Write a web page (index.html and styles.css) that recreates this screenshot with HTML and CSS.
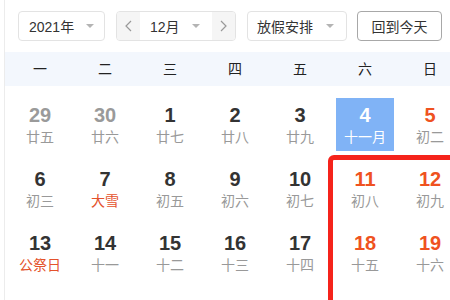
FILE: index.html
```html
<!doctype html>
<html>
    <head>
        <meta charset="utf-8">
        <title>万年历</title>
        <link rel="stylesheet" href="styles.css">
    </head>
    <body>
        <main class="calendar">
            <div class="toolbar">
                <div class="select year">
                    <span>2021年</span>
                    <i class="caret"></i>
                </div>
                <div class="month-group">
                    <span class="step">
                        <svg width="7" height="12" viewBox="0 0 7 12"><polyline points="6,1 1,6 6,11" fill="none" stroke="#999" stroke-width="1.2"/></svg>
                    </span>
                    <div class="select month">
                        <span>12月</span>
                        <i class="caret"></i>
                    </div>
                    <span class="step">
                        <svg width="7" height="12" viewBox="0 0 7 12"><polyline points="1,1 6,6 1,11" fill="none" stroke="#999" stroke-width="1.2"/></svg>
                    </span>
                </div>
                <div class="select holiday">
                    <span>放假安排</span>
                    <i class="caret"></i>
                </div>
                <button class="today">回到今天</button>
            </div>

            <div class="weekdays">
                <span>一</span>
                <span>二</span>
                <span>三</span>
                <span>四</span>
                <span>五</span>
                <span>六</span>
                <span>日</span>
            </div>

            <div class="days">
                <div class="day other"><b>29</b><span>廿五</span></div>
                <div class="day other"><b>30</b><span>廿六</span></div>
                <div class="day"><b>1</b><span>廿七</span></div>
                <div class="day"><b>2</b><span>廿八</span></div>
                <div class="day"><b>3</b><span>廿九</span></div>
                <div class="day weekend selected"><b>4</b><span>十一月</span></div>
                <div class="day weekend"><b>5</b><span>初二</span></div>

                <div class="day"><b>6</b><span>初三</span></div>
                <div class="day"><b>7</b><span class="festival">大雪</span></div>
                <div class="day"><b>8</b><span>初五</span></div>
                <div class="day"><b>9</b><span>初六</span></div>
                <div class="day"><b>10</b><span>初七</span></div>
                <div class="day weekend"><b>11</b><span>初八</span></div>
                <div class="day weekend"><b>12</b><span>初九</span></div>

                <div class="day"><b>13</b><span class="festival">公祭日</span></div>
                <div class="day"><b>14</b><span>十一</span></div>
                <div class="day"><b>15</b><span>十二</span></div>
                <div class="day"><b>16</b><span>十三</span></div>
                <div class="day"><b>17</b><span>十四</span></div>
                <div class="day weekend"><b>18</b><span>十五</span></div>
                <div class="day weekend"><b>19</b><span>十六</span></div>

                <div class="day"><b>20</b><span>十七</span></div>
                <div class="day"><b>21</b><span class="festival">冬至</span></div>
                <div class="day"><b>22</b><span>十九</span></div>
                <div class="day"><b>23</b><span>二十</span></div>
                <div class="day"><b>24</b><span>廿一</span></div>
                <div class="day weekend"><b>25</b><span>廿二</span></div>
                <div class="day weekend"><b>26</b><span>廿三</span></div>
            </div>

            <div class="mark"></div>
        </main>
    </body>
</html>
```

FILE: styles.css
```css
html,
body {
    margin: 0;
    height: 100%;
    overflow: hidden;
    background: #fff;
    font-family: "Liberation Sans", "Noto Sans CJK SC", sans-serif;
    color: #333;
}

.calendar {
    position: relative;
    margin-left: 4px;
    width: 470px;
    height: 100%;
    border-left: 1px solid #ececec;
}

.toolbar {
    display: flex;
    align-items: center;
    gap: 11px;
    height: 52px;
    padding-left: 13px;
    box-sizing: border-box;
    font-size: 14px;
}

.select {
    display: flex;
    align-items: center;
    justify-content: space-between;
    height: 30px;
    box-sizing: border-box;
    padding: 0 10px 0 10px;
    border: 1px solid #e3e3e3;
    border-radius: 4px;
    background: #fff;
}

.year {
    width: 87px;
}

.holiday {
    width: 100px;
    padding-left: 9px;
    padding-right: 12px;
}

.caret {
    width: 0;
    height: 0;
    border-left: 4px solid transparent;
    border-right: 4px solid transparent;
    border-top: 4px solid #b4b4b4;
}

.month-group {
    display: flex;
    height: 30px;
    border: 1px solid #e3e3e3;
    border-radius: 4px;
    overflow: hidden;
    box-sizing: border-box;
}

.month-group .select {
    width: 72px;
    height: 28px;
    border: none;
    border-radius: 0;
    padding-right: 12px;
}

.step {
    display: flex;
    align-items: center;
    justify-content: center;
    width: 23px;
    background: #f5f5f5;
}

.today {
    width: 85px;
    height: 30px;
    margin-left: -1px;
    border: 1px solid #a8a8a8;
    border-radius: 4px;
    background: #fff;
    font: inherit;
    font-size: 14px;
    color: #333;
    padding: 0;
}

.weekdays {
    display: grid;
    grid-template-columns: repeat(7, 58px);
    column-gap: 7px;
    padding-left: 6px;
    height: 34px;
    line-height: 34px;
    background: #f3f7fd;
    font-size: 14px;
    text-align: center;
    color: #222;
}

.days {
    display: grid;
    grid-template-columns: repeat(7, 58px);
    grid-auto-rows: 53px;
    column-gap: 7px;
    row-gap: 11px;
    padding: 12px 0 0 6px;
}

.day {
    display: flex;
    flex-direction: column;
    align-items: center;
    padding-top: 5px;
    box-sizing: border-box;
}

.day b {
    font-size: 20px;
    line-height: 24px;
    color: #333;
}

.day span {
    font-size: 14px;
    line-height: 20px;
    color: #999;
}

.day.other b {
    color: #9a9a9a;
}

.day.weekend b {
    color: #ef5220;
}

.day .festival {
    color: #e4522c;
}

.day.selected {
    background: #80b3f6;
}

.day.selected b,
.day.selected span {
    color: #fff;
}

.mark {
    position: absolute;
    left: 323px;
    top: 155px;
    width: 200px;
    height: 200px;
    border: 5px solid #f5231b;
    border-radius: 6px;
}
```
